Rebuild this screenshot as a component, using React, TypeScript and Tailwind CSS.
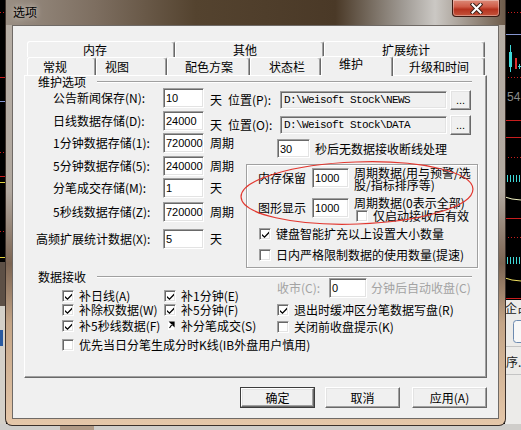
import React from 'react';

const sunken =
  'border border-t-[#a0a0a0] border-l-[#a0a0a0] border-r-white border-b-white shadow-[inset_1px_1px_0_#696969,inset_-1px_-1px_0_#e3e3e3]';
const raised =
  'border border-t-white border-l-white border-r-[#696969] border-b-[#696969] shadow-[inset_-1px_-1px_0_#a0a0a0,inset_1px_1px_0_#e3e3e3] bg-[#f0f0f0]';
const tabBase =
  'flex items-center bg-[#f0f0f0] border-t border-l border-r border-t-white border-l-white border-r-[#696969] rounded-t-[3px] shadow-[inset_-1px_0_0_#a0a0a0] whitespace-nowrap';

function Field({ children, className = '', bg = 'bg-white' }: { children?: React.ReactNode; className?: string; bg?: string }) {
  return (
    <div className={`${sunken} ${bg} ${className} flex items-center pl-[2px] shrink-0 overflow-hidden whitespace-nowrap font-['Liberation_Sans',sans-serif] text-[11px]`}>
      {children}
    </div>
  );
}

function PathField({ children }: { children: React.ReactNode }) {
  return (
    <div className={`${sunken} bg-[#f0f0f0] w-[167px] h-[18px] flex items-center pl-[3px] shrink-0 whitespace-nowrap font-['Liberation_Mono',monospace] text-[11px] tracking-[-0.6px]`}>
      {children}
    </div>
  );
}

function Check({ on = false }: { on?: boolean }) {
  return (
    <span className={`${sunken} bg-white w-[12px] h-[12px] shrink-0 flex items-center justify-center`}>
      {on && (
        <svg width="7" height="7" viewBox="0 0 7 7">
          <path d="M0 3 L2.5 5.2 L7 0.5 L7 2.6 L2.5 7 L0 4.8 Z" fill="#000" />
        </svg>
      )}
    </span>
  );
}

function Row({ label, value, unit, className = '', labelClass = 'pl-[28px]' }: { label: string; value: string; unit: string; className?: string; labelClass?: string }) {
  return (
    <div className={`flex items-center h-[20px] ${className}`}>
      <span className={`w-[138px] whitespace-nowrap ${labelClass}`}>{label}</span>
      <Field className="w-[41px] h-[20px]">{value}</Field>
      <span className="ml-[6px] whitespace-nowrap">{unit}</span>
    </div>
  );
}

function Backdrop() {
  return (
    <svg className="absolute left-0 top-0" width="521" height="430" viewBox="0 0 521 430">
      <rect width="521" height="430" fill="#000" />
      {/* left edge of the chart behind */}
      <g stroke="#c81e1e">
        <line x1="0" y1="12.5" x2="6" y2="12.5" strokeDasharray="1 2" />
        <line x1="0" y1="77.5" x2="6" y2="77.5" />
        <line x1="0" y1="152.5" x2="6" y2="152.5" strokeDasharray="1 2" />
        <line x1="0" y1="176.5" x2="6" y2="176.5" />
        <line x1="0" y1="231.5" x2="6" y2="231.5" strokeDasharray="1 2" />
      </g>
      <line x1="0" y1="101.5" x2="6" y2="101.5" stroke="#8595d0" />
      <line x1="0" y1="182.5" x2="6" y2="182.5" stroke="#e0d040" />
      <line x1="0" y1="257.5" x2="6" y2="257.5" stroke="#e0d040" />
      <rect x="0" y="262" width="6" height="44" fill="#5d5046" />
      <rect x="0" y="306" width="6" height="124" fill="#d4d0c8" />
      <rect x="0" y="330" width="3" height="16" fill="#2a5aa0" />
      {/* right edge of the chart behind */}
      <g stroke="#c81e1e">
        <line x1="505" y1="12.5" x2="521" y2="12.5" strokeDasharray="1 2" />
        <line x1="505" y1="77.5" x2="521" y2="77.5" strokeDasharray="1 2" />
        <line x1="505" y1="120.5" x2="521" y2="120.5" />
        <line x1="505" y1="137.5" x2="521" y2="137.5" />
        <line x1="505" y1="157.5" x2="521" y2="157.5" strokeDasharray="1 2" />
        <line x1="505" y1="218.5" x2="521" y2="218.5" />
        <line x1="505" y1="237.5" x2="521" y2="237.5" strokeDasharray="1 2" />
        <line x1="505" y1="298.5" x2="521" y2="298.5" />
      </g>
      <line x1="505" y1="34.5" x2="521" y2="34.5" stroke="#8595d0" />
      <line x1="510.5" y1="45" x2="510.5" y2="72" stroke="#40d8d8" />
      <rect x="509" y="52" width="3" height="15" fill="#40d8d8" />
      <rect x="515" y="58" width="2" height="11" fill="#e03030" />
      <path d="M518 66.5 H521 M519.5 64 V69" stroke="#40d8d8" />
      <text x="507" y="101" fontSize="12" fill="#8a8a8a" fontFamily="Liberation Sans, sans-serif">54</text>
      <g stroke="#40d8d8">
        <path d="M507.5 175 V182 M510.5 175 V182 M513.5 175 V182 M516.5 175 V182 M519.5 175 V182" />
        <path d="M507.5 257 V264 M510.5 257 V264 M513.5 257 V264 M516.5 257 V264 M519.5 257 V264" />
      </g>
      <path d="M505 197 L512 199 L521 200" stroke="#f0f0c0" fill="none" />
      <path d="M505 278 L512 280 L521 281" stroke="#f0e060" fill="none" />
      <rect x="505" y="300" width="16" height="130" fill="#ecebe9" />
      <text x="505" y="313" fontSize="12" fill="#222" fontFamily="Noto Sans CJK SC, sans-serif">企占</text>
      <rect x="513.5" y="320.5" width="12" height="22" rx="3" fill="#f8f8f8" stroke="#6d8ab0" />
      <line x1="505" y1="346.5" x2="521" y2="346.5" stroke="#c4c4c4" />
      <text x="506" y="367" fontSize="12" fill="#222" fontFamily="Noto Sans CJK SC, sans-serif">序.</text>
      <line x1="505" y1="374.5" x2="521" y2="374.5" stroke="#c4c4c4" />
      {/* strip below the window */}
      <rect x="0" y="424" width="521" height="6" fill="#cfcdca" />
      <rect x="60" y="424" width="34" height="6" fill="#b09a86" />
    </svg>
  );
}

function CloseButton() {
  return (
    <div className="ml-auto mr-[5px] w-[48px] h-[17px] rounded-b-[4px] border border-t-0 border-[#3a1a12] bg-[linear-gradient(180deg,#dc8a78_0%,#cf5c48_42%,#b5321e_58%,#c4553c_100%)] shadow-[inset_0_0_0_1px_rgba(255,255,255,0.35)] flex items-center justify-center">
      <svg width="13" height="11" viewBox="0 0 13 11">
        <path d="M2.5 1.5 L10.5 9.5 M10.5 1.5 L2.5 9.5" stroke="#3a2018" strokeWidth="4" strokeLinecap="square" />
        <path d="M2.5 1.5 L10.5 9.5 M10.5 1.5 L2.5 9.5" stroke="#fff" strokeWidth="2" strokeLinecap="square" />
      </svg>
    </div>
  );
}

export default function App() {
  return (
    <div className="relative w-[521px] h-[430px] overflow-hidden bg-black font-['Noto_Sans_CJK_SC',sans-serif] text-[12px] leading-[14px] text-black">
      <Backdrop />

      {/* 窗口 */}
      <div className="relative ml-[5px] w-[501px] h-[426px] rounded-b-[7px] border-x border-b border-[#3b302a] bg-[linear-gradient(180deg,#b7afa6_0%,#b1a89f_45%,#7c6553_62%,#c4a587_76%,#e5c7a9_100%)]">
        <div className="flex h-[25px] bg-[linear-gradient(90deg,#9a8f84_0%,#7d6e60_18%,#54432f_38%,#4a3927_66%,#a29d97_80%,#cbc8c4_86%,#6e5c4b_100%)]">
          <span className="ml-[7px] mt-[5px] [text-shadow:0_0_6px_rgba(255,255,255,0.8)]">选项</span>
          <CloseButton />
        </div>

        <div className="ml-[6px] w-[487px] h-[394px] border border-[#6f6a66] bg-[#f0f0f0] flex flex-col pt-[15px] px-[11px]">
          {/* 标签 */}
          <div className="flex h-[16px] ml-[3px]">
            <div className={`${tabBase} w-[148px] pl-[55px]`}>内存</div>
            <div className={`${tabBase} w-[149px] pl-[57px]`}>其他</div>
            <div className={`${tabBase} w-[161px] pl-[57px]`}>扩展统计</div>
          </div>
          <div className="flex h-[18px] ml-[3px] items-end">
            <div className={`${tabBase} h-[18px] w-[69px] pl-[15px]`}>常规</div>
            <div className={`${tabBase} h-[18px] w-[71px] pl-[8px]`}>视图</div>
            <div className={`${tabBase} h-[18px] w-[83px] pl-[17px]`}>配色方案</div>
            <div className={`${tabBase} h-[18px] w-[71px] pl-[18px]`}>状态栏</div>
            <div className="relative z-10 h-[20px] mb-[-1px] w-[72px] pl-[17px] leading-[13px] bg-[#f0f0f0] border-t border-l border-r border-t-white border-l-white border-r-[#696969] rounded-t-[3px] shadow-[inset_-1px_0_0_#a0a0a0]">
              维护
            </div>
            <div className={`${tabBase} h-[18px] w-[92px] pl-[15px]`}>升级和时间</div>
          </div>

          {/* 维护 页 */}
          <div className="w-[463px] h-[303px] border border-t-white border-l-white border-r-[#696969] border-b-[#696969] shadow-[inset_-1px_-1px_0_#a0a0a0] flex flex-col">
            <div className="flex items-center h-[12px] pl-[13px]">
              <span className="whitespace-nowrap">维护选项</span>
              <span className="ml-[11px] w-[375px] border-t border-t-[#a0a0a0] border-b border-b-white" />
            </div>

            <div className="flex items-start h-[22px]">
              <span className="w-[138px] h-[20px] pl-[28px] flex items-center whitespace-nowrap">公告新闻保存(N):</span>
              <Field className="w-[41px] h-[20px]">10</Field>
              <div className="flex items-center h-[20px] mt-[2px] ml-[6px]">
                <span>天</span>
                <span className="ml-[6px] w-[52px] whitespace-nowrap">位置(P):</span>
                <PathField>{'D:\\Weisoft Stock\\NEWS'}</PathField>
                <div className={`${raised} ml-[3px] w-[21px] h-[20px] flex items-end justify-center pb-[3px] font-['Liberation_Sans',sans-serif] text-[11px] leading-[11px]`}>...</div>
              </div>
            </div>

            <div className="flex items-start h-[22px] mt-[1px]">
              <span className="w-[138px] h-[20px] pl-[28px] flex items-center whitespace-nowrap">日线数据存储(D):</span>
              <Field className="w-[41px] h-[20px]">24000</Field>
              <div className="flex items-center h-[20px] mt-[4px] ml-[6px]">
                <span>天</span>
                <span className="ml-[6px] w-[52px] whitespace-nowrap">位置(O):</span>
                <PathField>{'D:\\Weisoft Stock\\DATA'}</PathField>
                <div className={`${raised} ml-[3px] w-[21px] h-[20px] flex items-end justify-center pb-[3px] font-['Liberation_Sans',sans-serif] text-[11px] leading-[11px]`}>...</div>
              </div>
            </div>

            <div className="flex items-start">
              <div className="w-[221px] flex flex-col">
                <Row label="1分钟数据存储(1):" value="720000" unit="周期" />
                <Row label="5分钟数据存储(5):" value="240000" unit="周期" className="mt-[3px]" />
                <Row label="分笔成交存储(M):" value="1" unit="天" className="mt-[2px]" />
                <Row label="5秒线数据存储(Z):" value="720000" unit="周期" className="mt-[4px]" />
                <Row label="高频扩展统计数据(X):" value="5" unit="天" className="mt-[7px]" labelClass="pl-[11px]" />
              </div>
              <div className="flex flex-col">
                <div className="flex items-center mt-[6px] ml-[31px] h-[19px]">
                  <Field className="w-[33px] h-[19px]">30</Field>
                  <span className="ml-[5px] whitespace-nowrap">秒后无数据接收断线处理</span>
                </div>
                <div className="mt-[6px] w-[232px] h-[104px] border border-[#a0a0a0] shadow-[inset_1px_1px_0_#fff,1px_1px_0_#fff] flex flex-col pl-[11px]">
                  <div className="flex items-start mt-[3px]">
                    <span className="w-[54px] h-[20px] flex items-center whitespace-nowrap">内存保留</span>
                    <Field className="w-[37px] h-[20px]">1000</Field>
                    <span className="ml-[5px] mt-[-1px] leading-[12px] whitespace-nowrap">
                      周期数据(用与预警/选
                      <br />
                      股/指标排序等)
                    </span>
                  </div>
                  <div className="flex items-start mt-[7px]">
                    <span className="w-[54px] h-[20px] flex items-center whitespace-nowrap">图形显示</span>
                    <Field className="w-[37px] h-[20px]">1000</Field>
                    <div className="ml-[5px] mt-[-1px] flex flex-col leading-[12px] whitespace-nowrap">
                      <span className="h-[11px]">周期数据(0表示全部)</span>
                      <span className="h-[13px] mt-[1px] flex items-center pl-[2px]">
                        <Check />
                        <span className="ml-[5px]">仅启动接收后有效</span>
                      </span>
                    </div>
                  </div>
                  <div className="flex items-center h-[14px] mt-[5px] ml-[1px]">
                    <Check on />
                    <span className="ml-[5px] whitespace-nowrap">键盘智能扩充以上设置大小数量</span>
                  </div>
                  <div className="flex items-center h-[14px] mt-[7px] ml-[1px]">
                    <Check />
                    <span className="ml-[5px] whitespace-nowrap">日内严格限制数据的使用数量(提速)</span>
                  </div>
                </div>
              </div>
            </div>

            {/* 数据接收 */}
            <div className="flex items-center h-[12px] pl-[13px] mt-[3px]">
              <span className="whitespace-nowrap">数据接收</span>
              <span className="ml-[11px] w-[375px] border-t border-t-[#a0a0a0] border-b border-b-white" />
            </div>
            <div className="flex items-start">
              <div className="ml-[37px] mt-[6px] w-[215px] flex flex-col">
                <div className="flex items-center h-[14px]">
                  <span className="w-[102px] flex items-center">
                    <Check on />
                    <span className="ml-[5px] whitespace-nowrap">补日线(A)</span>
                  </span>
                  <Check on />
                  <span className="ml-[5px] whitespace-nowrap">补1分钟(E)</span>
                </div>
                <div className="flex items-center h-[14px]">
                  <span className="w-[102px] flex items-center">
                    <Check on />
                    <span className="ml-[5px] whitespace-nowrap">补除权数据(W)</span>
                  </span>
                  <Check on />
                  <span className="ml-[5px] whitespace-nowrap">补5分钟(F)</span>
                </div>
                <div className="flex items-center h-[14px] mt-[2px]">
                  <span className="w-[102px] flex items-center">
                    <Check on />
                    <span className="ml-[5px] whitespace-nowrap">补5秒线数据(F)</span>
                  </span>
                  <svg width="12" height="12" viewBox="0 0 12 12" className="shrink-0">
                    <rect x="4" y="1" width="6" height="9" fill="#fff" />
                    <path d="M6 2 H10 V6 Z M9 3 L5.5 8" stroke="#000" strokeWidth="1.2" fill="#000" />
                  </svg>
                  <span className="ml-[5px] whitespace-nowrap">补分笔成交(S)</span>
                </div>
              </div>
              <div className="mt-[-5px] flex flex-col">
                <div className="flex items-center h-[20px] text-[#a3a3a3]">
                  <span className="w-[52px] whitespace-nowrap">收市(C):</span>
                  <Field className="w-[38px] h-[20px] text-black">0</Field>
                  <span className="ml-[4px] whitespace-nowrap">分钟后自动收盘(C)</span>
                </div>
                <div className="flex items-center h-[14px] mt-[5px]">
                  <Check on />
                  <span className="ml-[5px] whitespace-nowrap">退出时缓冲区分笔数据写盘(R)</span>
                </div>
                <div className="flex items-center h-[14px] mt-[3px]">
                  <Check />
                  <span className="ml-[5px] whitespace-nowrap">关闭前收盘提示(K)</span>
                </div>
              </div>
            </div>
            <div className="flex items-center h-[14px] mt-[4px] ml-[37px]">
              <Check />
              <span className="ml-[5px] whitespace-nowrap">优先当日分笔生成分时K线(IB外盘用户慎用)</span>
            </div>
          </div>

          {/* 按钮 */}
          <div className="flex justify-end mt-[9px]">
            <div className="w-[75px] h-[21px] border border-[#3c3c3c] flex">
              <div className={`${raised} flex-1 flex items-center justify-center`}>确定</div>
            </div>
            <div className={`${raised} ml-[10px] w-[75px] h-[21px] flex items-center justify-center`}>取消</div>
            <div className={`${raised} ml-[12px] w-[75px] h-[21px] flex items-center justify-center`}>应用(A)</div>
          </div>
        </div>
      </div>

      {/* 红色圈注 */}
      <svg className="absolute left-0 top-0 pointer-events-none" width="521" height="430" viewBox="0 0 521 430">
        <ellipse cx="357" cy="193" rx="116" ry="31" transform="rotate(-2 357 193)" fill="none" stroke="#e2372f" strokeWidth="1.2" />
      </svg>
    </div>
  );
}
